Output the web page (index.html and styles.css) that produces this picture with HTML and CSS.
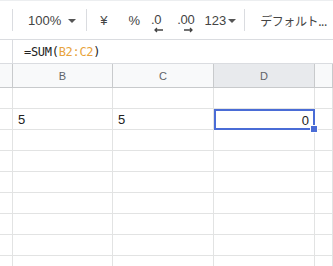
FILE: index.html
```html
<!DOCTYPE html>
<html lang="ja">
<head>
    <meta charset="UTF-8">
    <meta name="viewport" content="width=device-width, initial-scale=1.0">
    <title>シート</title>
    <link rel="stylesheet" href="styles.css">
</head>
<body>
    <div class="toolbar">
        <span class="sep"></span>
        <span class="tb zoom">100%</span>
        <span class="caret"></span>
        <span class="sep"></span>
        <span class="tb yen">¥</span>
        <span class="tb pct">%</span>
        <span class="tb dec">.0
            <svg class="arr" width="10" height="6" viewBox="0 0 10 6"><path d="M10 3H2M4 1L2 3L4 5" stroke="#444" stroke-width="1.3" fill="none"/></svg>
        </span>
        <span class="tb dec inc">.00
            <svg class="arr" width="10" height="6" viewBox="0 0 10 6"><path d="M0 3H8M6 1L8 3L6 5" stroke="#444" stroke-width="1.3" fill="none"/></svg>
        </span>
        <span class="tb fmt">123</span>
        <span class="caret small"></span>
        <span class="sep"></span>
        <span class="tb font">デフォルト...</span>
    </div>

    <div class="formula-bar">
        <span class="fx-sep"></span>
        <span class="formula">=SUM(<span class="ref">B2:C2</span>)</span>
    </div>

    <div class="grid">
        <div class="hd corner"></div>
        <div class="hd">B</div>
        <div class="hd">C</div>
        <div class="hd active">D</div>
        <div class="hd"></div>

        <div class="rh"></div><div class="c"></div><div class="c"></div><div class="c"></div><div class="c"></div>
        <div class="rh"></div><div class="c">5</div><div class="c">5</div><div class="c num selected">0</div><div class="c"></div>
        <div class="rh"></div><div class="c"></div><div class="c"></div><div class="c"></div><div class="c"></div>
        <div class="rh"></div><div class="c"></div><div class="c"></div><div class="c"></div><div class="c"></div>
        <div class="rh"></div><div class="c"></div><div class="c"></div><div class="c"></div><div class="c"></div>
        <div class="rh"></div><div class="c"></div><div class="c"></div><div class="c"></div><div class="c"></div>
        <div class="rh"></div><div class="c"></div><div class="c"></div><div class="c"></div><div class="c"></div>
        <div class="rh"></div><div class="c"></div><div class="c"></div><div class="c"></div><div class="c"></div>
        <div class="rh"></div><div class="c"></div><div class="c"></div><div class="c"></div><div class="c"></div>
    </div>
</body>
</html>
```

FILE: styles.css
```css
body { margin: 0; padding: 0; background: #fff; font-family: "Liberation Sans", Arial, sans-serif; color: #333; overflow: hidden; }

.toolbar { height: 38px; border-top: 1px solid #eceef0; border-bottom: 1px solid #dadce0; display: flex; align-items: center; color: #444; font-size: 13px; white-space: nowrap; overflow: hidden; box-sizing: content-box; }
.sep { width: 1px; height: 22px; background: #dadce0; flex: none; }
.toolbar > .sep:first-child { margin-left: 12px; }
.tb { flex: none; }
.zoom { margin-left: 15px; }
.caret { width: 0; height: 0; border-left: 4px solid transparent; border-right: 4px solid transparent; border-top: 4px solid #555; margin: 1px 10px 0 7px; flex: none; }
.caret.small { margin: 1px 8px 0 2px; }
.yen { margin-left: 13px; }
.pct { margin-left: 21px; }
.dec { margin-left: 11px; position: relative; display: inline-block; line-height: 16px; letter-spacing: -0.3px; }
.dec .arr { position: absolute; left: 2px; top: 15px; }
.dec.inc { margin-left: 16px; }
.dec.inc .arr { left: 7px; }
.fmt { margin-left: 10px; }
.font { margin-left: 15px; font-family: "Noto Sans CJK JP", "Liberation Sans", sans-serif; font-size: 12px; letter-spacing: -0.4px; }

.formula-bar { height: 23px; border-bottom: 1px solid #dadce0; display: flex; align-items: center; }
.fx-sep { width: 1px; height: 23px; background: #dadce0; margin-left: 12px; }
.formula { margin-left: 11px; font-family: "DejaVu Sans Mono", monospace; font-size: 12px; color: #222; letter-spacing: -0.3px; }
.ref { color: #e8a33b; }

.grid { display: grid; grid-template-columns: 13px 100px 101px 101px 1fr; grid-auto-rows: 21px; grid-template-rows: 24px; font-size: 13px; }
.grid > div { box-sizing: border-box; border-right: 1px solid #e2e3e3; border-bottom: 1px solid #e2e3e3; }
.hd { background: #f8f9fa; color: #5f6368; font-size: 11px; display: flex; align-items: center; justify-content: center; border-color: #c8cacc !important; }
.hd.active { background: #e8eaed; }
.rh { background: #fff; }
.c { padding: 3px 5px 0 5px; color: #222; line-height: 16px; }
.c.num { text-align: right; }
.selected { position: relative; border: 2px solid #4a6cd6 !important; padding: 2px 4px 0 4px; }
.selected::after { content: ""; position: absolute; right: -5px; bottom: -5px; width: 6px; height: 6px; background: #4a6cd6; border: 1px solid #fff; }
```
